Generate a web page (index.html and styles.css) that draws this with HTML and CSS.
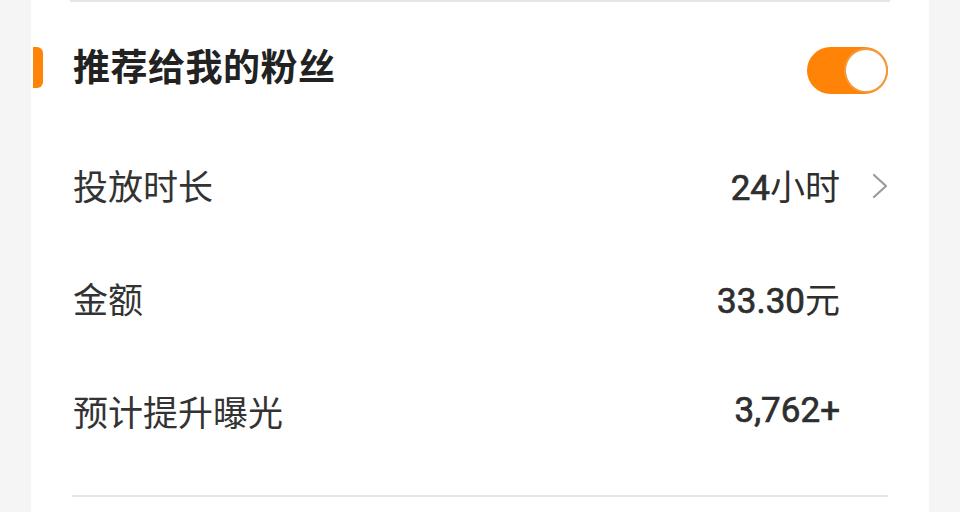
FILE: index.html
```html
<!DOCTYPE html>
<html lang="zh-CN">
<head>
    <meta charset="UTF-8">
    <meta name="viewport" content="width=device-width, initial-scale=1.0">
    <title>推荐给我的粉丝</title>
    <link rel="stylesheet" href="styles.css">
</head>
<body>

    <div class="card">
        <div class="divider divider-top"></div>

        <div class="section-head">
            <span class="accent"></span>
            <h2 class="section-title">推荐给我的粉丝</h2>
            <div class="switch is-on" onclick="this.classList.toggle('is-on')">
                <span class="switch-knob"></span>
            </div>
        </div>

        <div class="row">
            <span class="row-label">投放时长</span>
            <span class="row-value">24<span class="unit">小时</span></span>
            <span class="row-extra">
                <svg class="chevron" viewBox="0 0 16 26" width="16" height="26">
                    <path d="M2 2 L14 13 L2 24" fill="none" stroke="#9b9b9b" stroke-width="2.2" stroke-linecap="round" stroke-linejoin="round"/>
                </svg>
            </span>
        </div>
        <div class="row">
            <span class="row-label">金额</span>
            <span class="row-value">33.30<span class="unit">元</span></span>
            <span class="row-extra"></span>
        </div>
        <div class="row">
            <span class="row-label">预计提升曝光</span>
            <span class="row-value">3,762+</span>
            <span class="row-extra"></span>
        </div>

        <div class="divider divider-bottom"></div>
    </div>

</body>
</html>
```

FILE: styles.css
```css
body {
    margin: 0;
    background-color: #f5f5f5;
    font-family: "Roboto", "Noto Sans CJK SC", sans-serif;
    color: #333;
}
.card {
    background-color: #fff;
    margin: 0 31px;
    height: 512px;
    padding: 0 41px 0 42px;
    overflow: hidden;
}
.divider {
    height: 2px;
    background-color: #e6e6e6;
}
.divider-top {
    margin-left: -3px;
    margin-right: -2px;
}
.divider-bottom {
    margin-top: 28px;
    margin-left: -1px;
}
.section-head {
    display: flex;
    align-items: center;
    height: 126px;
    margin-left: -40px;
}
.accent {
    width: 10px;
    height: 41px;
    margin-top: 5px;
    background-color: #ff8307;
    border-radius: 0 6px 6px 0;
}
.section-title {
    flex: 1;
    margin: 0 0 0 30px;
    font-family: "Noto Sans CJK SC", sans-serif;
    font-size: 37px;
    font-weight: 700;
    color: #222;
    letter-spacing: 0.5px;
}
.switch {
    display: flex;
    justify-content: flex-start;
    align-items: center;
    box-sizing: border-box;
    width: 81px;
    height: 47px;
    margin-top: 11px;
    padding: 1px 0;
    border-radius: 24px;
    background-color: #ddd;
    cursor: pointer;
}
.switch.is-on {
    justify-content: flex-end;
    background-color: #ff8307;
}
.switch-knob {
    box-sizing: border-box;
    width: 44px;
    height: 45px;
    border-radius: 50%;
    background-color: #fff;
    border: 2px solid #f39a3e;
}
.row {
    display: flex;
    align-items: center;
    height: 113px;
}
.row-label {
    flex: 1;
    font-family: "Noto Sans CJK SC", sans-serif;
    font-size: 35px;
    color: #333;
}
/* digits sit a touch heavier than the labels */
.row-value {
    font-size: 35px;
    font-weight: 400;
    color: #2e2e2e;
    -webkit-text-stroke: 0.7px #2e2e2e;
}
.row-value .unit {
    -webkit-text-stroke: 0;
}
.row-extra {
    display: flex;
    justify-content: flex-end;
    width: 48px;
}
.chevron {
    display: block;
    margin-top: 2px;
}
```
